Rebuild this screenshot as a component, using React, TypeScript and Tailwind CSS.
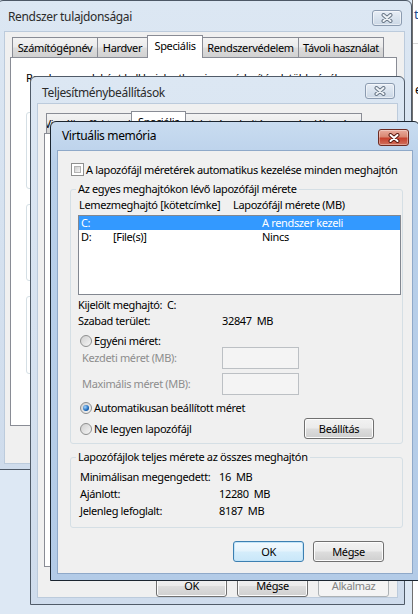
import React from 'react'

const FONT = "font-['Noto_Sans','Open_Sans',sans-serif]"

function CloseGlyph({ active }: { active?: boolean }) {
  const outer = active ? '#5a1a12' : '#6a7888'
  const inner = active ? '#ffffff' : '#eef2f6'
  return (
    <svg width="14" height="10" viewBox="0 0 14 10">
      <path d="M3.5 2L10.5 8M10.5 2L3.5 8" stroke={outer} strokeWidth="4" strokeLinecap="round" />
      <path d="M3.5 2L10.5 8M10.5 2L3.5 8" stroke={inner} strokeWidth="2" strokeLinecap="round" />
    </svg>
  )
}

function CloseButton({ active }: { active?: boolean }) {
  if (active) {
    return (
      <div className="w-[31px] h-[17px] rounded-[3px] border border-[#6d2b22] bg-[linear-gradient(#e9ab9d_0%,#d98773_45%,#c7412e_55%,#d0705c_100%)] shadow-[inset_0_0_0_1px_rgba(255,255,255,0.35)] flex items-center justify-center">
        <CloseGlyph active />
      </div>
    )
  }
  return (
    <div className="w-[30px] h-[16px] rounded-[3px] border border-[#8b9bb0] bg-[linear-gradient(#e8eef6_0%,#d9e3ee_50%,#cbd7e5_100%)] shadow-[inset_0_0_0_1px_rgba(255,255,255,0.5)] flex items-center justify-center">
      <CloseGlyph />
    </div>
  )
}

function Tab({ label, w, selected, first }: { label: string; w: string; selected?: boolean; first?: boolean }) {
  if (selected) {
    return (
      <div className={`${w} ${first ? '' : '-ml-px'} h-[23px] -mb-px relative z-10 bg-white border border-b-0 border-[#898c95] flex justify-center pt-[3px] whitespace-nowrap`}>
        {label}
      </div>
    )
  }
  return (
    <div className={`${w} ${first ? '' : '-ml-px'} h-[20px] border border-b-0 border-[#898c95] bg-[linear-gradient(#f3f3f3_0%,#ebebeb_48%,#dddddd_52%,#d1d1d1_100%)] flex items-center justify-center whitespace-nowrap overflow-hidden`}>
      {label}
    </div>
  )
}

function Btn({ children, className = '', kind = 'normal' }: { children: React.ReactNode; className?: string; kind?: 'normal' | 'default' | 'disabled' }) {
  const look =
    kind === 'default'
      ? 'border-[#3c7fb1] bg-[linear-gradient(#f2f9fe_0%,#e4f3fc_48%,#d5edfb_52%,#c9e7f9_100%)] shadow-[inset_0_0_0_1px_#c2e4f8] text-black'
      : kind === 'disabled'
        ? 'border-[#adb2b5] bg-[#f4f4f4] text-[#838383]'
        : 'border-[#707070] bg-[linear-gradient(#f2f2f2_0%,#ebebeb_48%,#dddddd_52%,#cfcfcf_100%)] shadow-[inset_0_0_0_1px_#fcfcfc] text-black'
  return (
    <button type="button" className={`flex items-center justify-center rounded-[3px] border shrink-0 ${look} ${className}`}>
      {children}
    </button>
  )
}

function Radio({ checked }: { checked?: boolean }) {
  return (
    <span className="w-[12px] h-[12px] rounded-full border border-[#8e8f8f] bg-[linear-gradient(135deg,#cfcfcf,#f6f6f6)] flex items-center justify-center shrink-0">
      {checked && <span className="w-[6px] h-[6px] rounded-full bg-[radial-gradient(circle_at_35%_35%,#a5d6ff,#1b67b8_60%,#0d3f7a)]" />}
    </span>
  )
}

function Checkbox() {
  return (
    <span className="w-[13px] h-[13px] border border-[#8e8f8f] bg-white p-[2px] flex shrink-0">
      <span className="flex-1 border border-[#b3b3b3] bg-[linear-gradient(135deg,#cdcdcd,#f4f4f4)]" />
    </span>
  )
}

function SystemProps() {
  return (
    <div className="absolute z-10 left-[-3px] top-0 w-[415px] h-[470px] rounded-t-[6px] border border-[#4d5866] bg-[linear-gradient(#dce7f3,#cfdcec)] flex flex-col">
      <div className="h-[31px] flex items-start justify-between pl-[10px] pr-[9px]">
        <span className="mt-[8px] text-[12px] leading-[16px] text-[#2b2b2b]">Rendszer tulajdonságai</span>
        <div className="mt-[9px]">
          <CloseButton />
        </div>
      </div>
      <div className="mx-[7px] mb-[6px] flex-1 bg-[#f0f0f0] shadow-[0_0_0_1px_#bccbdc] flex flex-col">
        <div className="pt-[3px] pl-[7px] flex items-end">
          <Tab first label="Számítógépnév" w="w-[86px]" />
          <Tab label="Hardver" w="w-[51px]" />
          <Tab selected label="Speciális" w="w-[56px]" />
          <Tab label="Rendszervédelem" w="w-[97px]" />
          <Tab label="Távoli használat" w="w-[86px]" />
        </div>
        <div className="ml-[5px] mr-[7px] h-[369px] border border-[#898c95] bg-white pl-[15px] pr-[15px] pt-[12px] flex flex-col">
          <p className="h-[16px] leading-[16px] whitespace-nowrap">
            Rendszergazdaként kell bejelentkeznie a módosítások többségéhez.
          </p>
          <div className="mt-[26px] h-[77px] rounded-[3px] border border-[#d5dfe5]" />
          <div className="mt-[15px] h-[77px] rounded-[3px] border border-[#d5dfe5]" />
          <div className="mt-[15px] h-[78px] rounded-[3px] border border-[#d5dfe5]" />
        </div>
      </div>
    </div>
  )
}

function PerfOptions() {
  return (
    <div className="absolute z-20 left-[30px] top-[76px] w-[375px] h-[529px] rounded-t-[6px] border border-[#505b68] bg-[linear-gradient(#dce7f3,#cfdcec)] flex flex-col">
      <div className="h-[27px] flex items-start justify-between pl-[11px] pr-[9px]">
        <span className="mt-[8px] text-[12px] leading-[16px] text-[#2b2b2b]">Teljesítménybeállítások</span>
        <div className="mt-[6px]">
          <CloseButton />
        </div>
      </div>
      <div className="mx-[7px] mb-[7px] flex-1 bg-[#f0f0f0] shadow-[0_0_0_1px_#bccbdc] flex flex-col">
        <div className="pt-[7px] pl-[8px] flex items-end">
          <Tab first label="Vizuális effektusok" w="w-[86px]" />
          <Tab selected label="Speciális" w="w-[55px]" />
          <Tab label="Adatvégrehajtás megakadályozása" w="w-[177px]" />
        </div>
        <div className="mx-[6px] h-[434px] border border-[#898c95] bg-white" />
        <div className="mt-[8px] pr-[8px] flex justify-end gap-[10px]">
          <Btn className="w-[71px] h-[22px]">OK</Btn>
          <Btn className="w-[71px] h-[22px]">Mégse</Btn>
          <Btn kind="disabled" className="w-[71px] h-[22px]">Alkalmaz</Btn>
        </div>
      </div>
    </div>
  )
}

function VirtualMemory() {
  return (
    <div className="absolute z-30 left-[50px] top-[121px] w-[370px] h-[460px] rounded-t-[6px] border border-[#1b2530] bg-[linear-gradient(180deg,#c9dcf0_0px,#b9d0ea_40px,#b3cbe7_100%)] flex flex-col">
      <div className="h-[29px] flex items-start justify-between pl-[11px] pr-[10px]">
        <span className="mt-[6px] text-[12px] leading-[16px] text-black">Virtuális memória</span>
        <div className="mt-[7px]">
          <CloseButton active />
        </div>
      </div>
      <div className="mx-[7px] mb-[7px] flex-1 bg-[#f0f0f0] shadow-[0_0_0_1px_#8fa9c9] flex flex-col pl-[12px] pr-[9px] whitespace-nowrap">
        <label className="mt-[12px] ml-px h-[13px] flex items-center gap-[2px]">
          <Checkbox />
          <span>A lapozófájl méretérek automatikus kezelése minden meghajtón</span>
        </label>

        <fieldset className="mt-[6px] border border-[#d5dfe5] rounded-[3px] pl-[7px] pr-px pb-[4px]">
          <legend className="ml-[-2px] px-[2px] leading-[14px]">Az egyes meghajtókon lévő lapozófájl mérete</legend>
          <div className="mt-[2px] h-[14px] pl-px flex">
            <span className="w-[154px] shrink-0">Lemezmeghajtó [kötetcímke]</span>
            <span>Lapozófájl mérete (MB)</span>
          </div>
          <div className="mt-[3px] h-[80px] border border-[#828790] bg-white">
            <div className="h-[14px] pl-[2px] flex bg-[#3399ff] text-white">
              <span className="w-[32px] shrink-0">C:</span>
              <span className="w-[149px] shrink-0" />
              <span>A rendszer kezeli</span>
            </div>
            <div className="h-[14px] pl-[2px] flex">
              <span className="w-[32px] shrink-0">D:</span>
              <span className="w-[149px] shrink-0">[File(s)]</span>
              <span>Nincs</span>
            </div>
          </div>
          <div className="mt-[2px] h-[16px] flex items-center">
            <span className="w-[89px] shrink-0">Kijelölt meghajtó:</span>
            <span>C:</span>
          </div>
          <div className="h-[16px] flex items-center">
            <span className="w-[144px] shrink-0">Szabad terület:</span>
            <span>32847&nbsp; MB</span>
          </div>
          <label className="mt-[6px] h-[12px] pl-[2px] flex items-center gap-[2px]">
            <Radio />
            <span>Egyéni méret:</span>
          </label>
          <div className="h-[22px] pl-[4px] flex items-center text-[#8d8d8d]">
            <span className="w-[140px] shrink-0">Kezdeti méret (MB):</span>
            <div className="w-[77px] h-[22px] shrink-0 border border-[#bcc0c4] bg-[#f4f4f4]" />
          </div>
          <div className="mt-[4px] h-[22px] pl-[4px] flex items-center text-[#8d8d8d]">
            <span className="w-[140px] shrink-0">Maximális méret (MB):</span>
            <div className="w-[77px] h-[22px] shrink-0 border border-[#bcc0c4] bg-[#f4f4f4]" />
          </div>
          <label className="mt-[7px] h-[12px] pl-[2px] flex items-center gap-[2px]">
            <Radio checked />
            <span>Automatikusan beállított méret</span>
          </label>
          <div className="mt-[4px] h-[21px] pl-[2px] flex items-center">
            <label className="flex items-center gap-[2px]">
              <Radio />
              <span>Ne legyen lapozófájl</span>
            </label>
            <Btn className="ml-auto mr-[27px] w-[70px] h-[21px]">Beállítás</Btn>
          </div>
        </fieldset>

        <fieldset className="mt-[6px] border border-[#d5dfe5] rounded-[3px] pl-[7px] pr-px pb-[8px]">
          <legend className="ml-[-2px] px-[2px] leading-[14px]">Lapozófájlok teljes mérete az összes meghajtón</legend>
          <div className="pt-[5px] pl-[2px] flex flex-col gap-px">
            <div className="h-[16px] flex items-center">
              <span className="w-[139px] shrink-0">Minimálisan megengedett:</span>
              <span>16&nbsp; MB</span>
            </div>
            <div className="h-[16px] flex items-center">
              <span className="w-[139px] shrink-0">Ajánlott:</span>
              <span>12280&nbsp; MB</span>
            </div>
            <div className="h-[16px] flex items-center">
              <span className="w-[139px] shrink-0">Jelenleg lefoglalt:</span>
              <span>8187&nbsp; MB</span>
            </div>
          </div>
        </fieldset>

        <div className="mt-[13px] pr-[19px] flex justify-end gap-[9px]">
          <Btn kind="default" className="w-[71px] h-[21px]">OK</Btn>
          <Btn className="w-[71px] h-[21px]">Mégse</Btn>
        </div>
      </div>
    </div>
  )
}

export default function App() {
  return (
    <div className={`relative w-[418px] h-[614px] overflow-hidden bg-[#dde8f4] text-[11px] leading-[14px] tracking-[-0.35px] text-black ${FONT}`}>
      {/* another window peeking out on the right */}
      <div className="absolute left-[412px] top-0 w-[20px] h-[614px] bg-white border-l border-[#6f6f6f]">
        <div className="pl-px pt-[6px] text-[13px] leading-[16px] text-[#1f4c8f]">t</div>
        <div className="mt-[21px] h-px bg-[#d8d8d8]" />
        <div className="mt-[38px] pl-[2px] text-[12px] leading-[16px]">e</div>
      </div>
      <SystemProps />
      <PerfOptions />
      <VirtualMemory />
    </div>
  )
}
